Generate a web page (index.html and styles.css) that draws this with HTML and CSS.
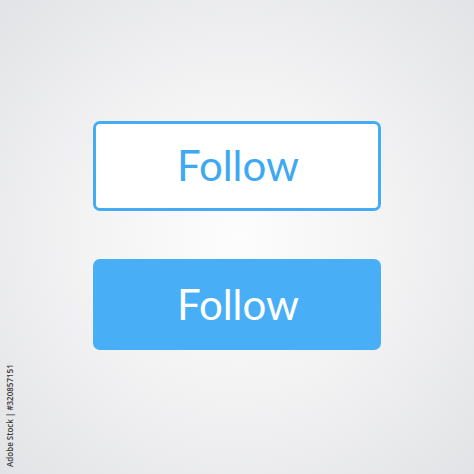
FILE: index.html
```html
<!DOCTYPE html>
<html lang="en">
<head>
    <meta charset="UTF-8">
    <meta name="viewport" content="width=device-width, initial-scale=1.0">
    <title>Follow Buttons</title>
    <link rel="stylesheet" href="styles.css">
</head>
<body>
    <main class="stage">
        <button class="btn btn-outline">Follow</button>
        <button class="btn btn-solid">Follow</button>
    </main>
    <div class="credit">Adobe Stock | #320857151</div>
</body>
</html>
```

FILE: styles.css
```css
html, body {
    margin: 0;
    height: 100%;
}
body {
    font-family: Lato, "Open Sans", sans-serif;
    background: radial-gradient(ellipse at 50% 50%, #fdfdfd 0%, #f3f3f4 45%, #e2e3e6 100%);
    overflow: hidden;
    position: relative;
}
.stage {
    display: flex;
    flex-direction: column;
    align-items: center;
    gap: 48px;
    padding-top: 121px;
}
.btn {
    box-sizing: border-box;
    width: 288px;
    height: 90px;
    border-radius: 7px;
    font-family: inherit;
    font-size: 42px;
    font-weight: 400;
    cursor: pointer;
    padding: 0 0 2px 2px;
    line-height: 1;
}
.btn-outline {
    background: #ffffff;
    color: #3ea9f2;
    border: 3px solid #45acf3;
}
.btn-solid {
    background: #48aff7;
    color: #ffffff;
    border: none;
    height: 91px;
}
.credit {
    position: absolute;
    left: 15px;
    bottom: 7px;
    transform: rotate(-90deg);
    transform-origin: left bottom;
    font-family: "Open Sans", sans-serif;
    font-size: 8px;
    font-weight: 600;
    color: #3a3a3a;
    white-space: nowrap;
}
```
